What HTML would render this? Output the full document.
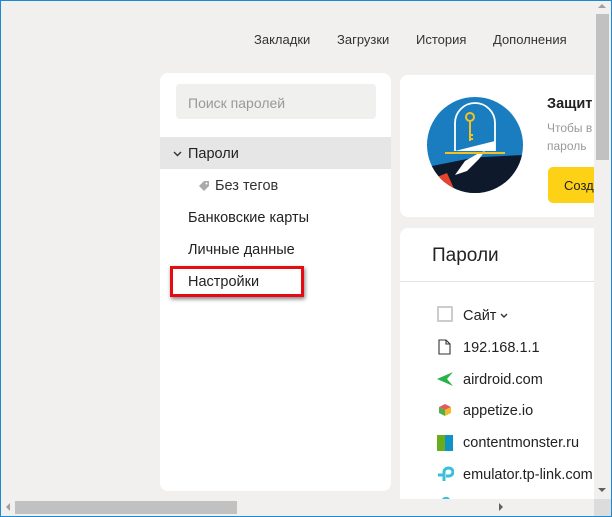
<!DOCTYPE html>
<html><head><meta charset="utf-8"><style>
*{margin:0;padding:0;box-sizing:border-box}
html,body{width:612px;height:517px;overflow:hidden}
body{background:#f1f0ee;font-family:"Liberation Sans",sans-serif;position:relative;color:#222}
.frame{position:absolute;inset:0;border:1px solid #1a8ad4;z-index:50;pointer-events:none}
.a{position:absolute;white-space:nowrap}
.nav{top:32px;font-size:13px;color:#333}
.left{position:absolute;left:160px;top:73px;width:231px;height:418px;background:#fff;border-radius:8px}
.search{position:absolute;left:176px;top:84px;width:200px;height:35px;background:#f0f0ef;border-radius:4px;font-size:14px;color:#999;padding:11px 12px}
.sel{position:absolute;left:160px;top:137px;width:231px;height:32px;background:#e6e6e6}
.it{font-size:14.5px;color:#222}
.red{position:absolute;left:170px;top:266px;width:134px;height:31px;border:3px solid #e40c12;box-shadow:1px 2px 4px rgba(0,0,0,.5)}
.card1{position:absolute;left:400px;top:75px;width:200px;height:142px;background:#fff;border-radius:8px 0 0 8px}
.card2{position:absolute;left:400px;top:228px;width:200px;height:280px;background:#fff;border-radius:8px 0 0 0}
.row{left:463px;font-size:14.5px;color:#222}
.vs{position:absolute;left:594px;top:1px;width:17px;height:498px;background:#f1f0ee}
.vt{position:absolute;left:596px;top:14px;width:13px;height:146px;background:#c1c1c1}
.hs{position:absolute;left:1px;top:499px;width:593px;height:17px;background:#f1f0ee}
.ht{position:absolute;left:15px;top:501px;width:222px;height:13px;background:#c1c1c1}
.corner{position:absolute;left:594px;top:499px;width:17px;height:17px;background:#dcdcdc}
</style></head><body>
<div class="frame"></div>
<div class="a nav" style="left:254px">Закладки</div>
<div class="a nav" style="left:337px">Загрузки</div>
<div class="a nav" style="left:416px">История</div>
<div class="a nav" style="left:493px">Дополнения</div>

<div class="left"></div>
<div class="search">Поиск паролей</div>
<div class="sel"></div>
<svg class="a" style="left:173px;top:151px" width="9" height="6" viewBox="0 0 9 6"><path d="M1 1l3.5 3.5L8 1" fill="none" stroke="#333" stroke-width="1.4"/></svg>
<div class="a it" style="left:188px;top:146px">Пароли</div>
<svg class="a" style="left:198px;top:180px" width="12" height="12" viewBox="0 0 12 12"><path d="M1 6L6 1h5v5l-5 5z" fill="#aaa"/><circle cx="8.5" cy="3.5" r="1" fill="#fff"/></svg>
<div class="a it" style="left:215px;top:178px;color:#333">Без тегов</div>
<div class="a it" style="left:188px;top:210px">Банковские карты</div>
<div class="a it" style="left:188px;top:242px">Личные данные</div>
<div class="red"></div>
<div class="a it" style="left:188px;top:274px">Настройки</div>

<div class="card1"></div>
<svg class="a" style="left:427px;top:97px" width="96" height="96" viewBox="0 0 96 96">
<defs><clipPath id="c"><circle cx="48" cy="48" r="48"/></clipPath></defs>
<g clip-path="url(#c)">
<rect width="96" height="96" fill="#1a7dc0"/>
<path d="M0 70L40 62 56 60 96 58V96H0z" fill="#0e1a2c"/>
<path d="M0 84L20 76 28 94 0 96z" fill="#e8432c"/>
<path d="M28 78l10-14 14-8 6-2-6 8-12 12z" fill="#fff"/>
</g>
<path d="M28 54V26a20 20 0 0 1 40 0V54" fill="none" stroke="#fff" stroke-width="1.8"/>
<path d="M28 54L68 44V54z" fill="#fff"/>
<path d="M18 56h60" stroke="#f2c320" stroke-width="2"/>
<circle cx="43" cy="20" r="4" fill="none" stroke="#f2c320" stroke-width="2"/>
<path d="M43 24v20M43 38h3M43 42h3" stroke="#f2c320" stroke-width="2"/>
</svg>
<div class="a" style="left:547px;top:96px;font-size:14.5px;font-weight:bold">Защит</div>
<div class="a" style="left:547px;top:121px;font-size:12px;color:#999">Чтобы в</div>
<div class="a" style="left:547px;top:139px;font-size:12px;color:#999">пароль</div>
<div class="a" style="left:548px;top:167px;width:50px;height:36px;background:#fcd116;border-radius:5px 0 0 5px;font-size:13px;padding:11px 0 0 16px;overflow:hidden">Созда</div>

<div class="card2"></div>
<div class="a" style="left:432px;top:245px;font-size:19px;color:#222">Пароли</div>
<div class="a" style="left:400px;top:281px;width:195px;height:1px;background:#e2e2e2"></div>
<div class="a" style="left:437px;top:306px;width:16px;height:16px;border:2px solid #ccc;border-radius:1px"></div>
<div class="a row" style="top:308px">Сайт</div>
<svg class="a" style="left:500px;top:313px" width="8" height="5" viewBox="0 0 8 5"><path d="M1 1l3 3 3-3" fill="none" stroke="#333" stroke-width="1.4"/></svg>
<svg class="a" style="left:438px;top:339px" width="13" height="16" viewBox="0 0 13 16"><path d="M1 1h7l4 4v10H1z M8 1v4h4" fill="none" stroke="#333" stroke-width="1.1"/></svg>
<div class="a row" style="top:340px">192.168.1.1</div>
<svg class="a" style="left:437px;top:372px" width="17" height="14" viewBox="0 0 17 14"><path d="M0 7L16 0 10 7 16 14z" fill="#27b24a"/></svg>
<div class="a row" style="top:372px">airdroid.com</div>
<svg class="a" style="left:439px;top:404px" width="12" height="12" viewBox="0 0 12 12"><path d="M6 0L12 3 6 6 0 3z" fill="#e85a5a"/><path d="M0 3l6 3v6L0 9z" fill="#49b349"/><path d="M12 3L6 6v6l6-3z" fill="#f3b92d"/></svg>
<div class="a row" style="top:403px">appetize.io</div>
<div class="a" style="left:437px;top:435px;width:8px;height:16px;background:#6aac1c"></div>
<div class="a" style="left:445px;top:435px;width:8px;height:16px;background:#0d93c4"></div>
<div class="a row" style="top:435px">contentmonster.ru</div>
<svg class="a" style="left:437px;top:465px" width="17" height="17" viewBox="0 0 17 17"><path d="M7 16V7a4.5 4 0 1 1 4.5 4H9" fill="none" stroke="#38c0d8" stroke-width="3"/><path d="M1 10h6" stroke="#38c0d8" stroke-width="3"/></svg>
<div class="a row" style="top:467px">emulator.tp-link.com</div>
<div class="a" style="left:442px;top:497px;width:8px;height:3px;background:#38c0d8;border-radius:4px 4px 0 0"></div>

<div class="vs"></div>
<div class="vt"></div>
<svg class="a" style="left:598px;top:3px" width="8" height="6"><path d="M0 5L4 1 8 5z" fill="#a0a0a0"/></svg>
<svg class="a" style="left:598px;top:487px" width="8" height="6"><path d="M0 1L4 5 8 1z" fill="#606060"/></svg>
<div class="hs"></div>
<div class="ht"></div>
<svg class="a" style="left:5px;top:503px" width="6" height="8"><path d="M5 0L1 4 5 8z" fill="#a0a0a0"/></svg>
<svg class="a" style="left:498px;top:503px" width="6" height="8"><path d="M1 0L5 4 1 8z" fill="#606060"/></svg>
<div class="corner"></div>
</body></html>
